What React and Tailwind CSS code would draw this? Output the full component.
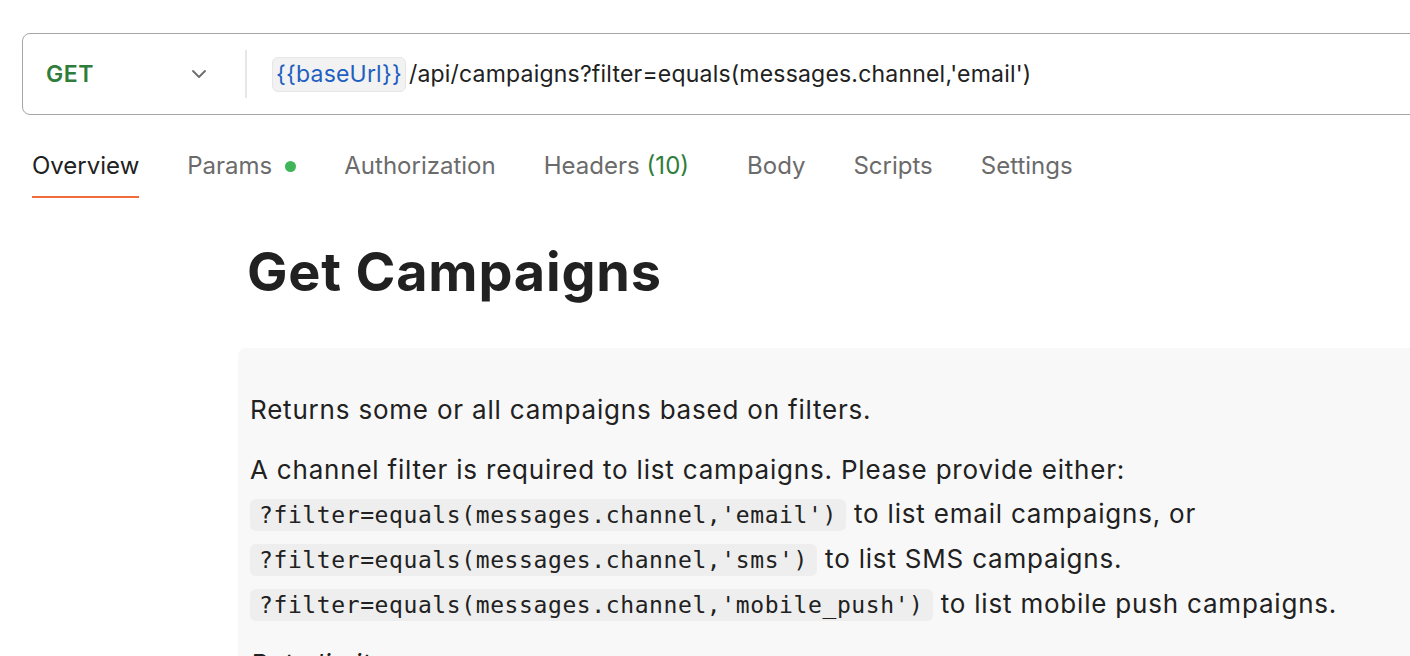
import { ChevronDown } from 'lucide-react';

const tabs = [
    { label: 'Overview', active: true },
    { label: 'Params', dot: true },
    { label: 'Authorization' },
    { label: 'Headers', count: '(10)' },
    { label: 'Body' },
    { label: 'Scripts' },
    { label: 'Settings' },
];

const Code = ({ children }) => (
    <code className="bg-[#eeeeee] rounded-[6px] px-[9px] py-[3px] text-[#212121] text-[23px] font-['DejaVu_Sans_Mono',monospace] tracking-[0.6px]">
        {children}
    </code>
);

const App = () => {
    return (
        <div className="w-[1410px] h-[656px] overflow-hidden bg-white font-['Inter',sans-serif] text-[#212121]">
            {/* URL bar */}
            <div className="pt-[33px] pl-[22px]">
                <div className="flex items-center h-[82px] w-[1420px] border border-[#a6a6a6] rounded-[8px]">
                    <div className="flex items-center w-[222px] pl-[23px] pr-[34px] justify-between">
                        <span className="text-[#2f7d3a] text-[23px] font-semibold tracking-[0.5px]">GET</span>
                        <ChevronDown size={24} strokeWidth={1.8} className="text-[#6b6b6b]" />
                    </div>
                    <div className="w-[2px] h-[48px] bg-[#e6e6e6]" />
                    <div className="flex items-center pl-[25px] text-[23px] tracking-[0.2px]">
                        <span className="bg-[#f2f2f2] border border-[#e6e6e6] rounded-[6px] px-[3px] h-[35px] flex items-center text-[#1f5fbf]">{'{{baseUrl}}'}</span>
                        <span className="ml-[3px]">/api/campaigns?filter=equals(messages.channel,'email')</span>
                    </div>
                </div>
            </div>

            {/* Tabs */}
            <div className="flex pl-[32px] mt-[21px] h-[64px]">
                {tabs.map(t => (
                    <div key={t.label} className="mr-[48px] flex flex-col">
                        <div className={`flex items-center h-[60px] text-[24px] ${t.active ? 'text-[#212121]' : 'text-[#6b6b6b]'}`}>
                            {t.label}
                            {t.dot && <span className="ml-[13px] w-[11px] h-[11px] rounded-full bg-[#3fb55a]" />}
                            {t.count && <span className="ml-[7px] mr-[10px] text-[#2f7d3a]">{t.count}</span>}
                        </div>
                        <div className={`h-[2px] ${t.active ? 'bg-[#f26b3a]' : ''}`} />
                    </div>
                ))}
            </div>

            {/* Content */}
            <div className="pl-[238px]">
                <h1 className="pl-[9px] pt-[40px] pb-[44px] text-[54px] font-bold leading-[64px] tracking-[0.8px] text-[#212121]">Get Campaigns</h1>
                <div className="bg-[#f8f8f8] rounded-tl-[8px] pl-[12px] pt-[40px] text-[26px] text-[#212121] leading-[44px] tracking-[0.8px]">
                    <p>Returns some or all campaigns based on filters.</p>
                    <p className="mt-[16px]">A channel filter is required to list campaigns. Please provide either:</p>
                    <p><Code>?filter=equals(messages.channel,'email')</Code> to list email campaigns, or</p>
                    <p><Code>?filter=equals(messages.channel,'sms')</Code> to list SMS campaigns.</p>
                    <p><Code>?filter=equals(messages.channel,'mobile_push')</Code> to list mobile push campaigns.</p>
                    <p className="mt-[15px] italic">Rate limits:</p>
                </div>
            </div>
        </div>
    );
};

export default App;
